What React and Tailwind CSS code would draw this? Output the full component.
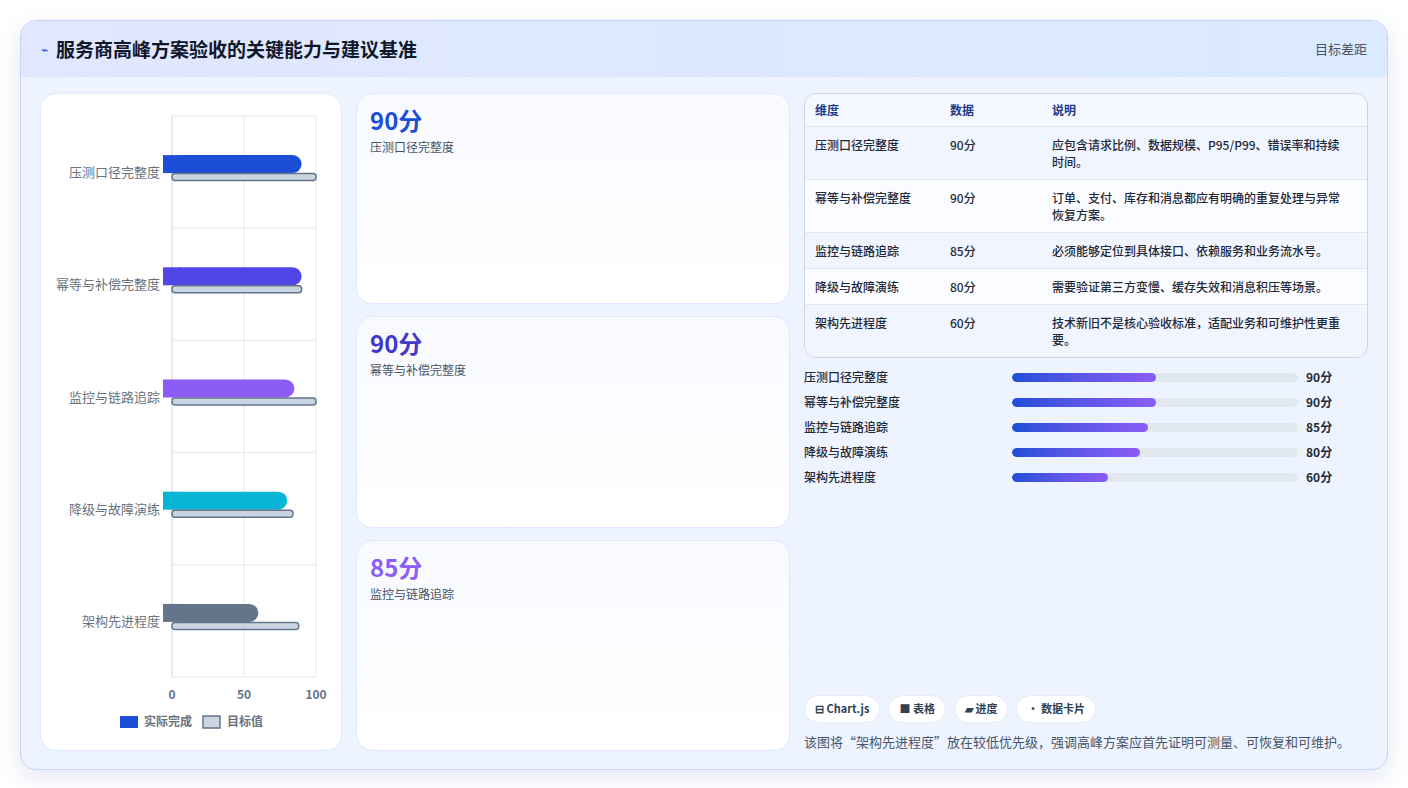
import React from 'react';

const rows = [
  { name: '压测口径完整度', v: 90, t: 100, c: '#1d4ed8', note: '应包含请求比例、数据规模、P95/P99、错误率和持续时间。' },
  { name: '幂等与补偿完整度', v: 90, t: 90, c: '#4f46e5', note: '订单、支付、库存和消息都应有明确的重复处理与异常恢复方案。' },
  { name: '监控与链路追踪', v: 85, t: 100, c: '#8b5cf6', note: '必须能够定位到具体接口、依赖服务和业务流水号。' },
  { name: '降级与故障演练', v: 80, t: 84, c: '#06b6d4', note: '需要验证第三方变慢、缓存失效和消息积压等场景。' },
  { name: '架构先进程度', v: 60, t: 88, c: '#64748b', note: '技术新旧不是核心验收标准，适配业务和可维护性更重要。' },
];

const font = { fontFamily: '"Noto Sans CJK SC", "Noto Sans", sans-serif' };

const Chart = () => {
  const x0 = 131, w = 144, top = 22, rowH = 112.2;
  return (
    <svg width="300" height="655" className="block">
      {[0, 50, 100].map((t) => (
        <line key={t} x1={x0 + t * 1.44} x2={x0 + t * 1.44} y1={top} y2={top + rowH * 5} stroke={t === 0 ? '#d1d5db' : '#e5e7eb'} />
      ))}
      {[0, 1, 2, 3, 4, 5].map((i) => (
        <line key={i} x1={x0} x2={x0 + w} y1={top + i * rowH} y2={top + i * rowH} stroke="#e5e7eb" />
      ))}
      {rows.map((r, i) => {
        const cy = top + i * rowH + rowH / 2;
        return (
          <g key={r.name}>
            <text x={x0 - 12} y={cy + 5} textAnchor="end" fontSize="13" fill="#6b7280">{r.name}</text>
            <rect x={x0} y={cy - 17} width={r.v * 1.44} height={18} rx={9} fill={r.c} />
            <rect x={x0 - 9} y={cy - 17} width={18} height={18} fill={r.c} />
            <rect x={x0} y={cy + 1.5} width={r.t * 1.44} height={7} rx={3} fill="#cbd5e1" stroke="#64748b" strokeWidth="1.5" />
          </g>
        );
      })}
      {[0, 50, 100].map((t) => (
        <text key={t} x={x0 + t * 1.44} y={top + rowH * 5 + 22} textAnchor="middle" fontSize="12" fontWeight="600" fill="#64748b">{t}</text>
      ))}
      <rect x="79" y="622" width="18" height="12" fill="#1d4ed8" />
      <text x="103" y="632" fontSize="12" fontWeight="600" fill="#6b7280">实际完成</text>
      <rect x="162" y="622" width="17" height="12" fill="#cbd5e1" stroke="#64748b" strokeWidth="1.5" />
      <text x="186" y="632" fontSize="12" fontWeight="600" fill="#6b7280">目标值</text>
    </svg>
  );
};

export default function App() {
  return (
    <div className="w-[1408px] h-[788px] bg-white pt-5 px-5" style={font}>
      <div className="h-[750px] rounded-2xl border border-[#c7d2fe] bg-[#eef4ff] shadow-[0_8px_24px_rgba(30,64,175,0.12)] overflow-hidden flex flex-col">
        <div className="h-[56px] shrink-0 flex items-center justify-between px-5 bg-gradient-to-r from-[#e0e7ff] to-[#dbeafe]">
          <div className="flex items-center gap-2">
            <span className="text-[#1d4ed8] text-xs">⌁</span>
            <span className="text-[19px] font-bold text-[#0f172a]">服务商高峰方案验收的关键能力与建议基准</span>
          </div>
          <span className="text-[13px] text-[#475569]">目标差距</span>
        </div>
        <div className="flex-1 flex gap-[14px] px-[19px] pt-[16px] pb-[18px]">
          <div className="w-[302px] bg-white rounded-2xl border border-[#e0e7ff] overflow-hidden">
            <Chart />
          </div>
          <div className="w-[434px] flex flex-col gap-3">
            {rows.slice(0, 3).map((r, i) => (
              <div key={r.name} className="flex-1 rounded-2xl border border-[#e0e7ff] bg-gradient-to-b from-[#f8faff] to-white px-[13px] py-[10px]">
                <div className={`text-[24px] font-bold leading-8 ${['text-[#1d4ed8]', 'text-[#4338ca]', 'text-[#8b5cf6]'][i]}`}>{r.v}分</div>
                <div className="text-[12px] text-[#475569] mt-0.5">{r.name}</div>
              </div>
            ))}
          </div>
          <div className="flex-1 flex flex-col">
            <div className="rounded-xl border border-[#cbd5e1] bg-[#f5f8ff] overflow-hidden text-[12px]">
              <div className="flex h-[33px] items-center text-[#1e3a8a] font-semibold border-b border-[#dbe3ef]">
                <div className="w-[145px] pl-[10px]">维度</div>
                <div className="w-[102px]">数据</div>
                <div className="flex-1">说明</div>
              </div>
              {rows.map((r, i) => (
                <div key={r.name} className={`flex py-[9px] text-[#1f2937] font-medium leading-[17px] ${i < 4 ? 'border-b border-[#e2e8f0]' : ''} ${i % 2 ? 'bg-[#fbfcff]' : 'bg-[#f1f5ff]'}`}>
                  <div className="w-[145px] pl-[10px]">{r.name}</div>
                  <div className="w-[102px]">{r.v}分</div>
                  <div className="flex-1 pr-4">{r.note}</div>
                </div>
              ))}
            </div>
            <div className="mt-[10px] flex flex-col gap-[7px]">
              {rows.map((r) => (
                <div key={r.name} className="flex items-center h-[18px] text-[12px] font-medium text-[#1f2937]">
                  <div className="w-[208px]">{r.name}</div>
                  <div className="w-[286px] h-[9px] rounded-full bg-[#e2e8f0] overflow-hidden">
                    <div className="h-full rounded-full bg-gradient-to-r from-[#1d4ed8] to-[#8b5cf6]" style={{ width: `${r.v * 0.56}%` }} />
                  </div>
                  <div className="ml-2 font-bold">{r.v}分</div>
                </div>
              ))}
            </div>
            <div className="flex-1" />
            <div className="flex gap-2 text-[11px] font-bold text-[#334155]">
              {['⊟ Chart.js', '■ 表格', '▰ 进度', '• 数据卡片'].map((t) => (
                <span key={t} className="h-[28px] px-[10px] flex items-center rounded-full bg-white border border-[#e5eaf5]">{t}</span>
              ))}
            </div>
            <div className="mt-[9px] text-[13px] text-[#475569]">该图将“架构先进程度”放在较低优先级，强调高峰方案应首先证明可测量、可恢复和可维护。</div>
          </div>
        </div>
      </div>
    </div>
  );
}
